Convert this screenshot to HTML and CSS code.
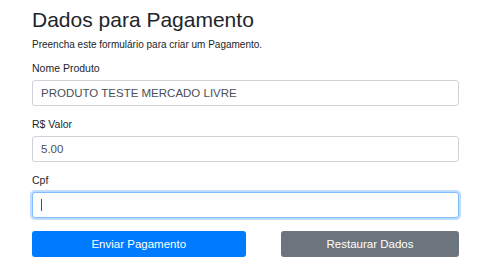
FILE: index.html
```html
<!DOCTYPE html>
<html lang="pt-BR">
<head>
    <meta charset="UTF-8">
    <meta name="viewport" content="width=device-width, initial-scale=1.0">
    <title>Dados para Pagamento</title>
    <link rel="stylesheet" href="styles.css">
</head>
<body>
    <div class="container">
        <h1>Dados para Pagamento</h1>
        <p class="lead">Preencha este formulário para criar um Pagamento.</p>
        <form action="/pagamento" method="post">
            <div class="form-group">
                <label for="produto">Nome Produto</label>
                <input type="text" id="produto" name="produto" value="PRODUTO TESTE MERCADO LIVRE">
            </div>
            <div class="form-group">
                <label for="valor">R$ Valor</label>
                <input type="text" id="valor" name="valor" value="5.00">
            </div>
            <div class="form-group">
                <label for="cpf">Cpf</label>
                <div class="field">
                    <input type="text" id="cpf" name="cpf" class="focused">
                    <span class="caret"></span>
                </div>
            </div>
            <div class="actions">
                <button type="submit" class="btn btn-primary">Enviar Pagamento</button>
                <button type="reset" class="btn btn-secondary">Restaurar Dados</button>
            </div>
        </form>
    </div>
</body>
</html>
```

FILE: styles.css
```css
body {
    font-family: "Liberation Sans", Arial, sans-serif;
    margin: 0;
    padding: 0;
    background-color: #fff;
    color: #212529;
}

.container {
    width: 427px;
    margin: 0 auto;
    padding-top: 7px;
}

h1 {
    font-size: 21px;
    font-weight: 400;
    line-height: 25px;
    margin: 0 0 7px 0;
}

.lead {
    font-size: 10px;
    line-height: 12px;
    margin: 0 0 11px 0;
}

.form-group {
    margin-bottom: 12px;
}

label {
    display: block;
    font-size: 10.5px;
    line-height: 12px;
    margin-bottom: 6px;
}

input {
    display: block;
    box-sizing: border-box;
    width: 100%;
    height: 26px;
    padding: 0 8px;
    font-family: inherit;
    font-size: 11.5px;
    color: #495057;
    border: 1px solid #ced4da;
    border-radius: 3px;
    background-color: #fff;
}

input.focused {
    border-color: #80bdff;
    box-shadow: 0 0 0 2px rgba(0, 123, 255, 0.25);
    outline: none;
}

.field {
    position: relative;
}

.caret {
    position: absolute;
    left: 9px;
    top: 7px;
    width: 1px;
    height: 12px;
    background-color: #495057;
}

.actions {
    display: grid;
    grid-template-columns: repeat(12, 1fr);
    padding-top: 1px;
}

.btn {
    height: 26px;
    border: none;
    border-radius: 3px;
    color: #fff;
    font-family: inherit;
    font-size: 11.5px;
    cursor: pointer;
}

.btn-primary {
    grid-column: 1 / span 6;
    background-color: #007bff;
}

.btn-secondary {
    grid-column: 8 / span 5;
    background-color: #6c757d;
}
```
